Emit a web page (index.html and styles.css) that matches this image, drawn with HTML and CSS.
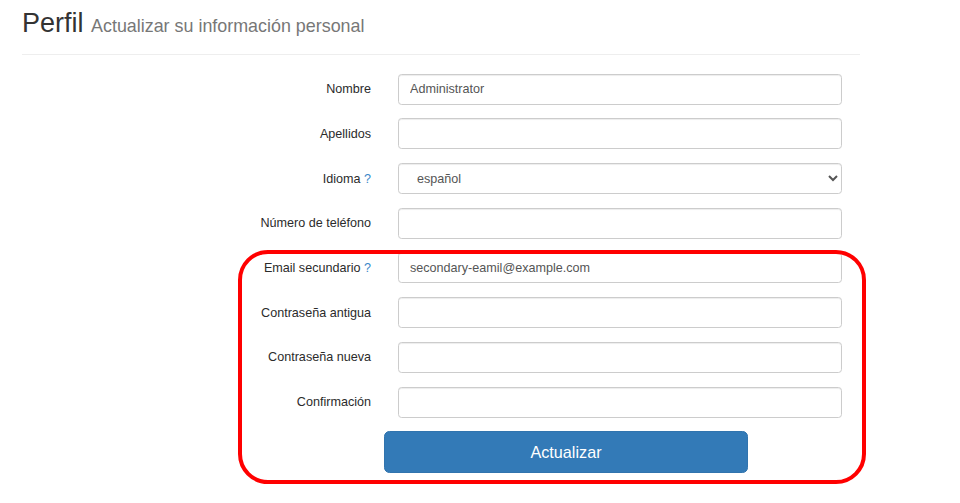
FILE: index.html
```html
<!DOCTYPE html>
<html lang="es">
<head>
    <meta charset="UTF-8">
    <title>Perfil</title>
    <link rel="stylesheet" href="styles.css">
</head>
<body>
    <div class="page">
        <div class="page-header">
            <h2>Perfil <small>Actualizar su información personal</small></h2>
        </div>

        <form class="profile-form">
            <div class="form-row">
                <label>Nombre</label>
                <input type="text" class="form-control" value="Administrator">
            </div>
            <div class="form-row">
                <label>Apellidos</label>
                <input type="text" class="form-control">
            </div>
            <div class="form-row">
                <label>Idioma <span class="help">?</span></label>
                <select class="form-control select">
                    <option>español</option>
                </select>
            </div>
            <div class="form-row">
                <label>Número de teléfono</label>
                <input type="text" class="form-control">
            </div>
            <div class="form-row">
                <label>Email secundario <span class="help">?</span></label>
                <input type="text" class="form-control" value="secondary-eamil@example.com">
            </div>
            <div class="form-row">
                <label>Contraseña antigua</label>
                <input type="password" class="form-control">
            </div>
            <div class="form-row">
                <label>Contraseña nueva</label>
                <input type="password" class="form-control">
            </div>
            <div class="form-row">
                <label>Confirmación</label>
                <input type="password" class="form-control">
            </div>
            <div class="actions">
                <button type="button" class="btn-primary">Actualizar</button>
            </div>
        </form>

        <div class="highlight"></div>
    </div>
</body>
</html>
```

FILE: styles.css
```css
body {
    margin: 0;
    font-family: "Liberation Sans", Arial, sans-serif;
    font-size: 12.6px;
    color: #333;
    background-color: #fff;
}
.page {
    position: relative;
    width: 838px;
    min-height: 503px;
    box-sizing: border-box;
    padding: 9px 0 0 22px;
}
.page-header {
    width: 838px;
    border-bottom: 1px solid #eee;
    padding-bottom: 15px;
}
h2 {
    margin: 0;
    font-size: 27px;
    font-weight: 500;
    line-height: 1.1;
    color: #333;
}
h2 small {
    font-size: 17.9px;
    font-weight: 400;
    color: #777;
}
.profile-form {
    padding-top: 19px;
    display: flex;
    flex-direction: column;
    gap: 13.7px;
}
.form-row {
    display: grid;
    grid-template-columns: 349px 444px;
    column-gap: 27px;
    align-items: center;
}
.form-row label {
    text-align: right;
    color: #2b2b2b;
}
.help {
    color: #3a87c8;
}
.form-control {
    box-sizing: border-box;
    width: 100%;
    height: 31px;
    padding: 5px 11px;
    font-family: "Liberation Sans", Arial, sans-serif;
    font-size: 12.6px;
    color: #555;
    background-color: #fff;
    border: 1px solid #ccc;
    border-radius: 3.6px;
    box-shadow: inset 0 1px 1px rgba(0, 0, 0, 0.075);
}
.select {
    padding-left: 14px;
}
.actions {
    padding-left: 362px;
}
.btn-primary {
    width: 364px;
    height: 42px;
    font-family: "Liberation Sans", Arial, sans-serif;
    font-size: 16.2px;
    color: #fff;
    background-color: #337ab7;
    border: 1px solid #3174ae;
    border-radius: 5.4px;
}
.highlight {
    position: absolute;
    left: 238px;
    top: 250px;
    width: 628px;
    height: 234px;
    box-sizing: border-box;
    border: 4.5px solid #f00;
    border-radius: 30px;
    pointer-events: none;
}
```
